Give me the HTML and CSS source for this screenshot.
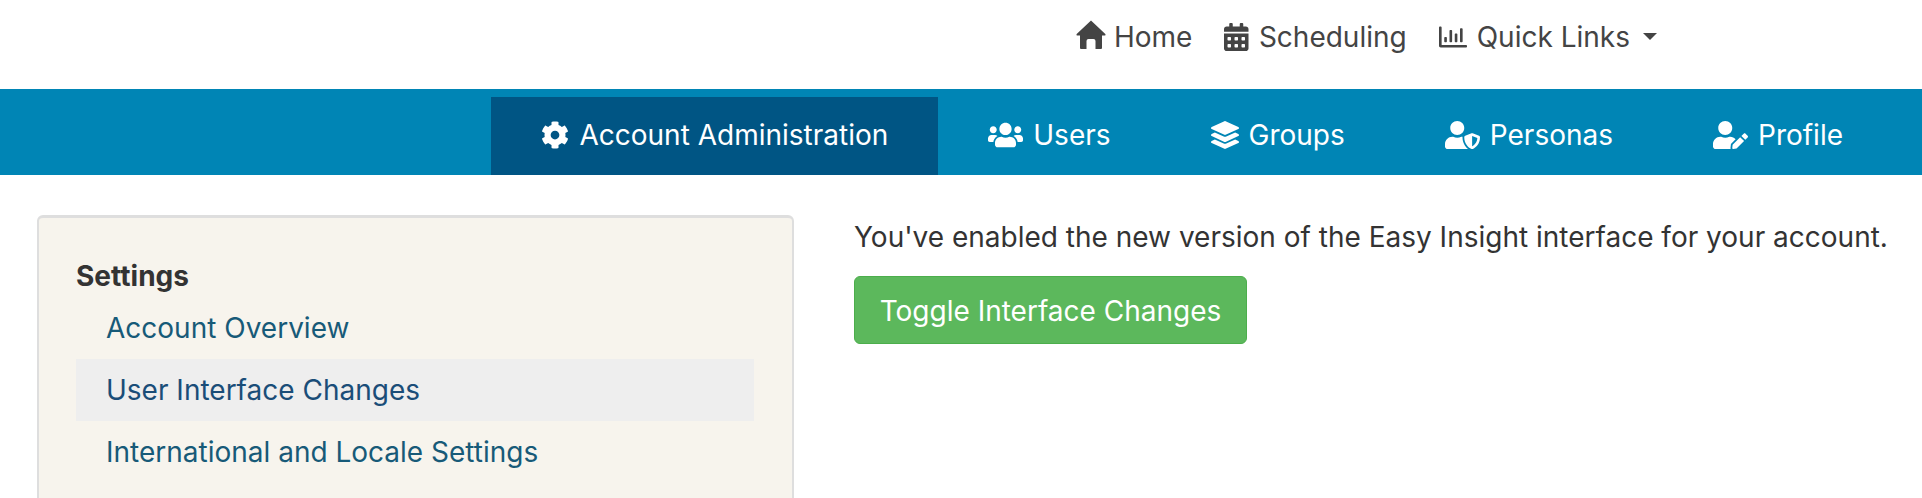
FILE: index.html
```html
<!DOCTYPE html>
<html lang="en">
<head>
    <meta charset="UTF-8">
    <title>Account Administration</title>
    <link rel="stylesheet" href="styles.css">
</head>
<body>

    <!-- Top links -->
    <header class="top-bar">
        <a class="top-link" href="#">
            <svg class="icon icon-home" viewBox="0 0 30 29"><path d="M15 .5 29.3 14a.9.9 0 0 1-.6 1.5H26V28a1 1 0 0 1-1 1h-5.5v-8a2 2 0 0 0-2-2h-5a2 2 0 0 0-2 2v8H5a1 1 0 0 1-1-1V15.5H1.3A.9.9 0 0 1 .7 14z"/></svg>
            Home
        </a>
        <a class="top-link" href="#">
            <svg class="icon" viewBox="0 0 448 512"><path d="M0 464c0 26.5 21.5 48 48 48h352c26.5 0 48-21.5 48-48V192H0v272zm320-196c0-6.6 5.4-12 12-12h40c6.6 0 12 5.4 12 12v40c0 6.6-5.4 12-12 12h-40c-6.6 0-12-5.4-12-12v-40zm0 128c0-6.6 5.4-12 12-12h40c6.6 0 12 5.4 12 12v40c0 6.6-5.4 12-12 12h-40c-6.6 0-12-5.4-12-12v-40zM192 268c0-6.6 5.4-12 12-12h40c6.6 0 12 5.4 12 12v40c0 6.6-5.4 12-12 12h-40c-6.6 0-12-5.4-12-12v-40zm0 128c0-6.6 5.4-12 12-12h40c6.6 0 12 5.4 12 12v40c0 6.6-5.4 12-12 12h-40c-6.6 0-12-5.4-12-12v-40zM64 268c0-6.6 5.4-12 12-12h40c6.6 0 12 5.4 12 12v40c0 6.6-5.4 12-12 12H76c-6.6 0-12-5.4-12-12v-40zm0 128c0-6.6 5.4-12 12-12h40c6.6 0 12 5.4 12 12v40c0 6.6-5.4 12-12 12H76c-6.6 0-12-5.4-12-12v-40zM400 64h-48V16c0-8.8-7.2-16-16-16h-32c-8.8 0-16 7.2-16 16v48H160V16c0-8.8-7.2-16-16-16h-32c-8.8 0-16 7.2-16 16v48H48C21.5 64 0 85.5 0 112v48h448v-48c0-26.5-21.5-48-48-48z"/></svg>
            Scheduling
        </a>
        <a class="top-link" href="#">
            <svg class="icon" viewBox="0 0 512 512"><path d="M396.8 352h22.4c6.4 0 12.8-6.4 12.8-12.8V108.8c0-6.4-6.4-12.8-12.8-12.8h-22.4c-6.4 0-12.8 6.4-12.8 12.8v230.4c0 6.4 6.4 12.8 12.8 12.8zm-192 0h22.4c6.4 0 12.8-6.4 12.8-12.8V140.8c0-6.4-6.4-12.8-12.8-12.8h-22.4c-6.4 0-12.8 6.4-12.8 12.8v198.4c0 6.4 6.4 12.8 12.8 12.8zm96 0h22.4c6.4 0 12.8-6.4 12.8-12.8V204.8c0-6.4-6.4-12.8-12.8-12.8h-22.4c-6.4 0-12.8 6.4-12.8 12.8v134.4c0 6.4 6.4 12.8 12.8 12.8zM496 400H48V80c0-8.84-7.16-16-16-16H16C7.16 64 0 71.16 0 80v336c0 17.67 14.33 32 32 32h464c8.84 0 16-7.16 16-16v-16c0-8.84-7.16-16-16-16zm-387.2-48h22.4c6.4 0 12.8-6.4 12.8-12.8v-70.4c0-6.4-6.4-12.8-12.8-12.8h-22.4c-6.4 0-12.8 6.4-12.8 12.8v70.4c0 6.4 6.4 12.8 12.8 12.8z"/></svg>
            Quick Links
            <span class="caret"></span>
        </a>
    </header>

    <!-- Main navigation -->
    <nav class="main-nav">
        <a class="nav-link active" href="#">
            <svg class="icon" viewBox="0 0 512 512"><path d="M487.4 315.7l-42.6-24.6c4.3-23.2 4.3-47 0-70.2l42.6-24.6c4.9-2.8 7.1-8.6 5.5-14-11.1-35.6-30-67.8-54.7-94.6-3.8-4.1-10-5.1-14.8-2.3L380.8 110c-17.9-15.4-38.5-27.3-60.8-35.1V25.8c0-5.6-3.9-10.5-9.4-11.7-36.7-8.2-74.3-7.8-109.2 0-5.5 1.2-9.4 6.1-9.4 11.7V75c-22.2 7.9-42.8 19.8-60.8 35.1L88.7 85.5c-4.9-2.8-11-1.9-14.8 2.3-24.7 26.7-43.6 58.9-54.7 94.6-1.7 5.4.6 11.2 5.5 14L67.3 221c-4.3 23.2-4.3 47 0 70.2l-42.6 24.6c-4.9 2.8-7.1 8.6-5.5 14 11.1 35.6 30 67.8 54.7 94.6 3.8 4.1 10 5.1 14.8 2.3l42.6-24.6c17.9 15.4 38.5 27.3 60.8 35.1v49.2c0 5.6 3.9 10.5 9.4 11.7 36.7 8.2 74.3 7.8 109.2 0 5.5-1.2 9.4-6.1 9.4-11.7v-49.2c22.2-7.9 42.8-19.8 60.8-35.1l42.6 24.6c4.9 2.8 11 1.9 14.8-2.3 24.7-26.7 43.6-58.9 54.7-94.6 1.5-5.5-.7-11.3-5.6-14.1zM256 336c-44.1 0-80-35.9-80-80s35.9-80 80-80 80 35.9 80 80-35.9 80-80 80z"/></svg>
            Account Administration
        </a>
        <a class="nav-link" href="#">
            <svg class="icon" viewBox="0 0 640 512"><path d="M96 224c35.3 0 64-28.7 64-64s-28.7-64-64-64-64 28.7-64 64 28.7 64 64 64zm448 0c35.3 0 64-28.7 64-64s-28.7-64-64-64-64 28.7-64 64 28.7 64 64 64zm32 32h-64c-17.6 0-33.5 7.1-45.1 18.6 40.3 22.1 68.9 62 75.1 109.4h66c17.7 0 32-14.3 32-32v-32c0-35.3-28.7-64-64-64zm-256 0c61.9 0 112-50.1 112-112S381.9 32 320 32 208 82.1 208 144s50.1 112 112 112zm76.8 32h-8.3c-20.8 10-43.9 16-68.5 16s-47.6-6-68.5-16h-8.3C179.6 288 128 339.6 128 403.2V432c0 26.5 21.5 48 48 48h288c26.5 0 48-21.5 48-48v-28.8c0-63.6-51.6-115.2-115.2-115.2zm-223.7-13.4C161.5 263.1 145.6 256 128 256H64c-35.3 0-64 28.7-64 64v32c0 17.7 14.3 32 32 32h65.9c6.3-47.4 34.9-87.3 75.2-109.4z"/></svg>
            Users
        </a>
        <a class="nav-link" href="#">
            <svg class="icon" viewBox="0 0 512 512"><path d="M12.41 148.02l232.94 105.67c6.8 3.09 14.49 3.09 21.29 0l232.94-105.67c16.55-7.51 16.55-32.52 0-40.03L266.65 2.31a25.607 25.607 0 0 0-21.29 0L12.41 107.98c-16.55 7.51-16.55 32.53 0 40.04zm487.18 88.28l-58.09-26.33-161.64 73.27c-7.56 3.43-15.59 5.17-23.86 5.17s-16.29-1.74-23.86-5.17L70.51 209.97l-58.1 26.33c-16.55 7.5-16.55 32.5 0 40l232.94 105.59c6.8 3.08 14.49 3.08 21.29 0L499.59 276.3c16.55-7.5 16.55-32.5 0-40zm0 127.8l-57.87-26.23-161.86 73.37c-7.56 3.43-15.59 5.17-23.86 5.17s-16.29-1.74-23.86-5.17L70.29 337.87 12.41 364.1c-16.55 7.5-16.55 32.5 0 40l232.94 105.59c6.8 3.08 14.49 3.08 21.29 0L499.59 404.1c16.55-7.5 16.55-32.5 0-40z"/></svg>
            Groups
        </a>
        <a class="nav-link" href="#">
            <svg class="icon" viewBox="0 0 640 512"><path d="M622.3 271.1l-115.2-45c-4.1-1.6-12.6-3.7-22.2 0l-115.2 45c-10.7 4.2-17.7 14-17.7 24.9 0 111.6 68.7 188.8 132.9 213.9 9.6 3.7 18 1.6 22.2 0C558.4 489.9 640 420.5 640 296c0-10.9-7-20.7-17.7-24.9zM496 462.4V273.3l95.5 37.3c-5.6 87.1-60.9 135.4-95.5 151.8zM224 256c70.7 0 128-57.3 128-128S294.7 0 224 0 96 57.3 96 128s57.3 128 128 128zm96 40c0-2.5.8-4.8 1.1-7.2-2.5-.1-4.9-.8-7.5-.8h-16.7c-22.2 10.2-46.9 16-72.9 16s-50.6-5.8-72.9-16h-16.7C60.2 288 0 348.2 0 422.4V464c0 26.5 21.5 48 48 48h352c6.8 0 13.3-1.5 19.2-4-54-42.9-99.2-116.7-99.2-212z"/></svg>
            Personas
        </a>
        <a class="nav-link" href="#">
            <svg class="icon" viewBox="0 0 640 512"><path d="M224 256c70.7 0 128-57.3 128-128S294.7 0 224 0 96 57.3 96 128s57.3 128 128 128zm89.6 32h-16.7c-22.2 10.2-46.9 16-72.9 16s-50.6-5.8-72.9-16h-16.7C60.2 288 0 348.2 0 422.4V464c0 26.5 21.5 48 48 48h274.9c-2.4-6.8-3.4-14-2.6-21.3l6.8-60.9 1.2-11.1 7.9-7.9 77.3-77.3c-24.5-27.7-60-45.5-99.9-45.5zm45.3 145.3l-6.8 61c-1.1 10.2 7.5 18.8 17.6 17.6l60.9-6.8 137.9-137.9-71.7-71.7-137.9 137.8zM633 268.9L595.1 231c-9.3-9.3-24.5-9.3-33.8 0l-37.8 37.8-4.1 4.1 71.8 71.7 41.8-41.8c9.3-9.4 9.3-24.5 0-33.9z"/></svg>
            Profile
        </a>
    </nav>

    <div class="page">
        <!-- Settings menu -->
        <aside class="sidebar">
            <h4 class="sidebar-title">Settings</h4>
            <a class="side-link" href="#">Account Overview</a>
            <a class="side-link current" href="#">User Interface Changes</a>
            <a class="side-link" href="#">International and Locale Settings</a>
        </aside>

        <main class="content">
            <p class="message">You've enabled the new version of the Easy Insight interface for your account.</p>
            <button class="toggle-btn" type="button">Toggle Interface Changes</button>
        </main>
    </div>

</body>
</html>
```

FILE: styles.css
```css
* {
    box-sizing: border-box;
}

html, body {
    height: 100%;
    overflow: hidden;
}

body {
    margin: 0;
    font-family: Inter, "Liberation Sans", sans-serif;
    font-size: 28px;
    line-height: 1.5;
    color: #333;
    background-color: #fff;
}

a {
    text-decoration: none;
}

.icon {
    height: 1em;
    width: auto;
    fill: currentColor;
    flex-shrink: 0;
}

.icon-home {
    height: 29px;
    margin-bottom: 4px;
    margin-right: -2px;
}

.top-bar {
    display: flex;
    justify-content: flex-end;
    align-items: center;
    gap: 32px;
    height: 89px;
    padding: 0 265px 16px 0;
}

.top-link {
    display: flex;
    align-items: center;
    gap: 10px;
    color: #444;
}

.caret {
    width: 0;
    height: 0;
    margin-left: 3px;
    border-top: 7px solid #444;
    border-left: 7px solid transparent;
    border-right: 7px solid transparent;
}

.main-nav {
    display: flex;
    justify-content: flex-end;
    height: 86px;
    padding: 8px 29px 0 0;
    background-color: #0085b5;
}

.nav-link {
    display: flex;
    align-items: center;
    gap: 10px;
    padding: 0 50px 2px;
    color: #fff;
}

.nav-link.active {
    background-color: #005584;
}

.page {
    display: flex;
    padding: 40px 0 0 37px;
    gap: 60px;
}

.sidebar {
    width: 757px;
    height: 300px;
    padding: 38px 38px 38px 37px;
    background-color: #f7f4ed;
    border: 2px solid #dedede;
    border-top-width: 3px;
    border-radius: 6px;
}

.sidebar-title {
    margin: 0;
    font-size: 28px;
    line-height: 41px;
    font-weight: 700;
    color: #333;
}

.side-link {
    display: block;
    height: 62px;
    padding: 0 30px;
    line-height: 62px;
    color: #175a78;
}

.side-link.current {
    background-color: #eee;
    color: #1a4d78;
}

.content {
    padding-top: 1px;
}

.message {
    margin: 0 0 18px;
}

.toggle-btn {
    width: 393px;
    height: 68px;
    padding-top: 3px;
    font-family: inherit;
    font-size: 28px;
    color: #fff;
    background-color: #5cb85c;
    border: 1px solid #4cae4c;
    border-radius: 6px;
}
```
